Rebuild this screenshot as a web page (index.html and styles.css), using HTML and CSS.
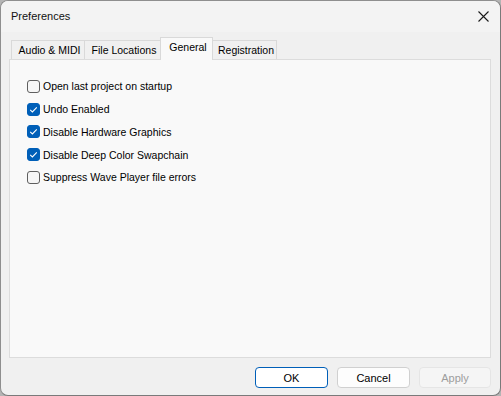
FILE: index.html
```html
<!DOCTYPE html>
<html lang="en">
<head>
    <meta charset="UTF-8">
    <title>Preferences</title>
    <link rel="stylesheet" href="styles.css">
</head>
<body>
    <div class="window">
        <div class="titlebar">
            <span class="title">Preferences</span>
            <svg class="close" width="11" height="11" viewBox="0 0 11 11">
                <path d="M0.5 0.5 L10.5 10.5 M10.5 0.5 L0.5 10.5" stroke="#1a1a1a" stroke-width="1.1" fill="none"/>
            </svg>
        </div>

        <div class="body">
            <div class="tabs">
                <div class="tab tab-audio">Audio &amp; MIDI</div>
                <div class="tab tab-files">File Locations</div>
                <div class="tab tab-general active">General</div>
                <div class="tab tab-reg">Registration</div>
            </div>

            <div class="panel">
                <label class="option">
                    <span class="box"></span>
                    Open last project on startup
                </label>
                <label class="option">
                    <span class="box checked">
                        <svg width="13" height="13" viewBox="0 0 13 13"><path d="M3.2 6.8 L5.4 8.9 L9.8 4.3" stroke="#fff" stroke-width="1.1" fill="none"/></svg>
                    </span>
                    Undo Enabled
                </label>
                <label class="option">
                    <span class="box checked">
                        <svg width="13" height="13" viewBox="0 0 13 13"><path d="M3.2 6.8 L5.4 8.9 L9.8 4.3" stroke="#fff" stroke-width="1.1" fill="none"/></svg>
                    </span>
                    Disable Hardware Graphics
                </label>
                <label class="option">
                    <span class="box checked">
                        <svg width="13" height="13" viewBox="0 0 13 13"><path d="M3.2 6.8 L5.4 8.9 L9.8 4.3" stroke="#fff" stroke-width="1.1" fill="none"/></svg>
                    </span>
                    Disable Deep Color Swapchain
                </label>
                <label class="option">
                    <span class="box"></span>
                    Suppress Wave Player file errors
                </label>
            </div>

            <div class="buttons">
                <button class="btn default">OK</button>
                <button class="btn">Cancel</button>
                <button class="btn apply" disabled>Apply</button>
            </div>
        </div>
    </div>
</body>
</html>
```

FILE: styles.css
```css
* {
    margin: 0;
    padding: 0;
    box-sizing: border-box;
}

body {
    font-family: "Liberation Sans", Arial, sans-serif;
    font-size: 10.5px;
    color: #000;
    background: #b4b4b4;
    width: 501px;
    height: 396px;
    overflow: hidden;
}

.window {
    width: 501px;
    height: 396px;
    background: #f0f0f0;
    border: 1px solid #8e8e8e;
    border-right-color: #7a7a7a;
    border-bottom-color: #7a7a7a;
    border-radius: 8px;
    overflow: hidden;
    display: flex;
    flex-direction: column;
}

.titlebar {
    height: 31px;
    background: #f3f3f3;
    display: flex;
    align-items: center;
    justify-content: space-between;
    padding: 0 11px 0 10px;
}

.title {
    font-size: 11px;
    color: #111;
    margin-top: -1px;
}

.close {
    margin-top: -1px;
}

.body {
    flex: 1;
    padding: 6px 9px 0 8px;
    display: flex;
    flex-direction: column;
}

.tabs {
    display: flex;
    align-items: flex-end;
    height: 21px;
    padding-left: 2px;
    position: relative;
    z-index: 1;
}

.tab {
    height: 19px;
    line-height: 18px;
    padding-left: 3px;
    text-align: center;
    border: 1px solid #d9d9d9;
    border-bottom: none;
    border-left: none;
    background: #f0f0f0;
    white-space: nowrap;
}

.tab-audio {
    width: 74px;
    border-left: 1px solid #d9d9d9;
}

.tab-files {
    width: 76px;
}

.tab-general {
    width: 53px;
}

.tab-reg {
    width: 64px;
}

.tab.active {
    height: 23px;
    line-height: 19px;
    margin-bottom: -1px;
    margin-left: -1px;
    background: #f9f9f9;
    border-left: 1px solid #d9d9d9;
}

.panel {
    height: 299px;
    background: #f9f9f9;
    border: 1px solid #dcdcdc;
    padding: 15px 0 0 17px;
    display: flex;
    flex-direction: column;
}

.option {
    display: flex;
    align-items: center;
    height: 22.75px;
    gap: 3px;
    color: #000;
}

.box {
    width: 13px;
    height: 13px;
    border: 1px solid #5f5f5f;
    border-radius: 3px;
    background: #f6f6f6;
    display: flex;
    align-items: center;
    justify-content: center;
}

.box.checked {
    background: #005fb8;
    border-color: #005fb8;
}

.box svg {
    display: block;
    flex-shrink: 0;
}

.buttons {
    display: flex;
    justify-content: flex-end;
    gap: 9px;
    margin-top: 9px;
}

.btn {
    width: 73px;
    height: 21px;
    font-family: "Liberation Sans", Arial, sans-serif;
    font-size: 11px;
    color: #000;
    background: #fdfdfd;
    border: 1px solid #d0d0d0;
    border-radius: 4px;
}

.btn.default {
    border-color: #005fb8;
    background: #fff;
}

.btn.apply {
    width: 72px;
}

.btn:disabled {
    color: #9d9d9d;
    background: #f5f5f5;
    border-color: #e5e5e5;
}
```
